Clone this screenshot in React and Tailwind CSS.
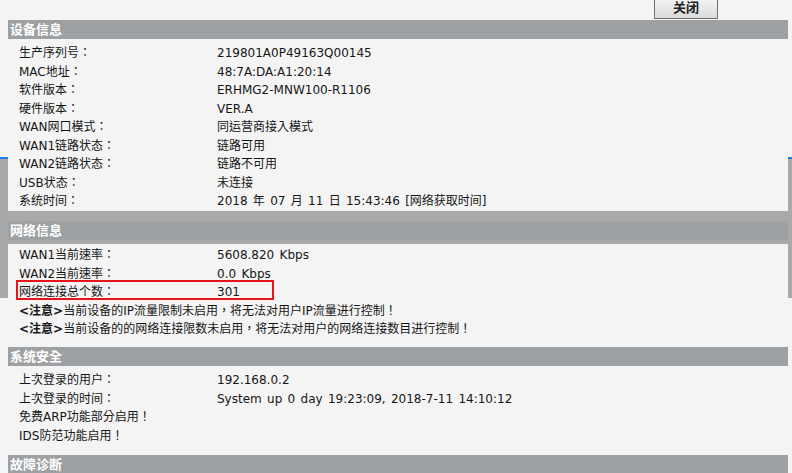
import React from 'react';

const deviceRows = [
    ['生产序列号：', '219801A0P49163Q00145'],
    ['MAC地址：', '48:7A:DA:A1:20:14'],
    ['软件版本：', 'ERHMG2-MNW100-R1106'],
    ['硬件版本：', 'VER.A'],
    ['WAN网口模式：', '同运营商接入模式'],
    ['WAN1链路状态：', '链路可用'],
    ['WAN2链路状态：', '链路不可用'],
    ['USB状态：', '未连接'],
    ['系统时间：', '2018 年 07 月 11 日 15:43:46 [网络获取时间]'],
];

const securityRows = [
    ['上次登录的用户：', '192.168.0.2'],
    ['上次登录的时间：', 'System up 0 day 19:23:09, 2018-7-11 14:10:12'],
];

// ─── Section header bar ───────────────────────────
function Header({ title }) {
    return (
        <div className="h-[19px] bg-[#9da1a4] pl-[2px] text-[13px] font-bold leading-[19px] text-white">
            {title}
        </div>
    );
}

function Row({ label, value, children }) {
    return (
        <div className="relative flex h-[18.5px] items-center whitespace-nowrap">
            <span className="w-[209px] pl-[11px]">{label}</span>
            <span className="[word-spacing:1.5px]">{value}</span>
            {children}
        </div>
    );
}

function Line({ children }) {
    return (
        <div className="flex h-[18.5px] items-center whitespace-nowrap pl-[11px]">
            {children}
        </div>
    );
}

export default function App() {
    return (
        <div
            className="relative h-[473px] overflow-hidden bg-[#f4f4f4] text-[12px] text-[#161616]"
            style={{ fontFamily: '"DejaVu Sans", "Noto Sans CJK TC", sans-serif' }}
        >
            {/* grey frame from the page behind */}
            <div className="absolute left-0 right-0 top-[157px] h-[141px] border-t-2 border-[#1a7ef0] bg-[#a9a9a9]" />

            <div className="relative w-[788px] pl-[8px]">
                {/* ─── Close button ─── */}
                <div className="flex justify-end pr-[70px]">
                    <button className="-mt-[4px] mb-[1px] h-[23px] w-[64px] border border-[#707070] bg-gradient-to-b from-[#f6f6f6] to-[#dadada] text-[13px] font-bold text-[#222]">
                        关闭
                    </button>
                </div>

                {/* ─── 设备信息 ─── */}
                <Header title="设备信息" />
                <div className="bg-[#f4f4f4] pt-[5px]">
                    {deviceRows.map(([l, v]) => (
                        <Row key={l} label={l} value={v} />
                    ))}
                </div>

                {/* ─── 网络信息 ─── */}
                <div className="mt-[10.5px]">
                    <Header title="网络信息" />
                </div>
                <div className="mt-[4px] bg-[#f4f4f4] pt-[2px]">
                    <Row label="WAN1当前速率：" value="5608.820 Kbps" />
                    <Row label="WAN2当前速率：" value="0.0 Kbps" />
                    <Row label="网络连接总个数：" value="301">
                        <span className="absolute left-[8px] top-[-3px] h-[20px] w-[258px] border-2 border-[#e8141c]" />
                    </Row>
                    <Line>
                        <b>&lt;注意&gt;</b>当前设备的IP流量限制未启用，将无法对用户IP流量进行控制！
                    </Line>
                    <Line>
                        <b>&lt;注意&gt;</b>当前设备的的网络连接限数未启用，将无法对用户的网络连接数目进行控制！
                    </Line>
                </div>

                {/* ─── 系统安全 ─── */}
                <div className="mt-[8.5px]">
                    <Header title="系统安全" />
                </div>
                <div className="bg-[#f4f4f4] pt-[5px]">
                    {securityRows.map(([l, v]) => (
                        <Row key={l} label={l} value={v} />
                    ))}
                    <Line>免费ARP功能部分启用！</Line>
                    <Line>IDS防范功能启用！</Line>
                </div>

                {/* ─── 故障诊断 ─── */}
                <div className="mt-[9.5px]">
                    <Header title="故障诊断" />
                </div>
            </div>
        </div>
    );
}
